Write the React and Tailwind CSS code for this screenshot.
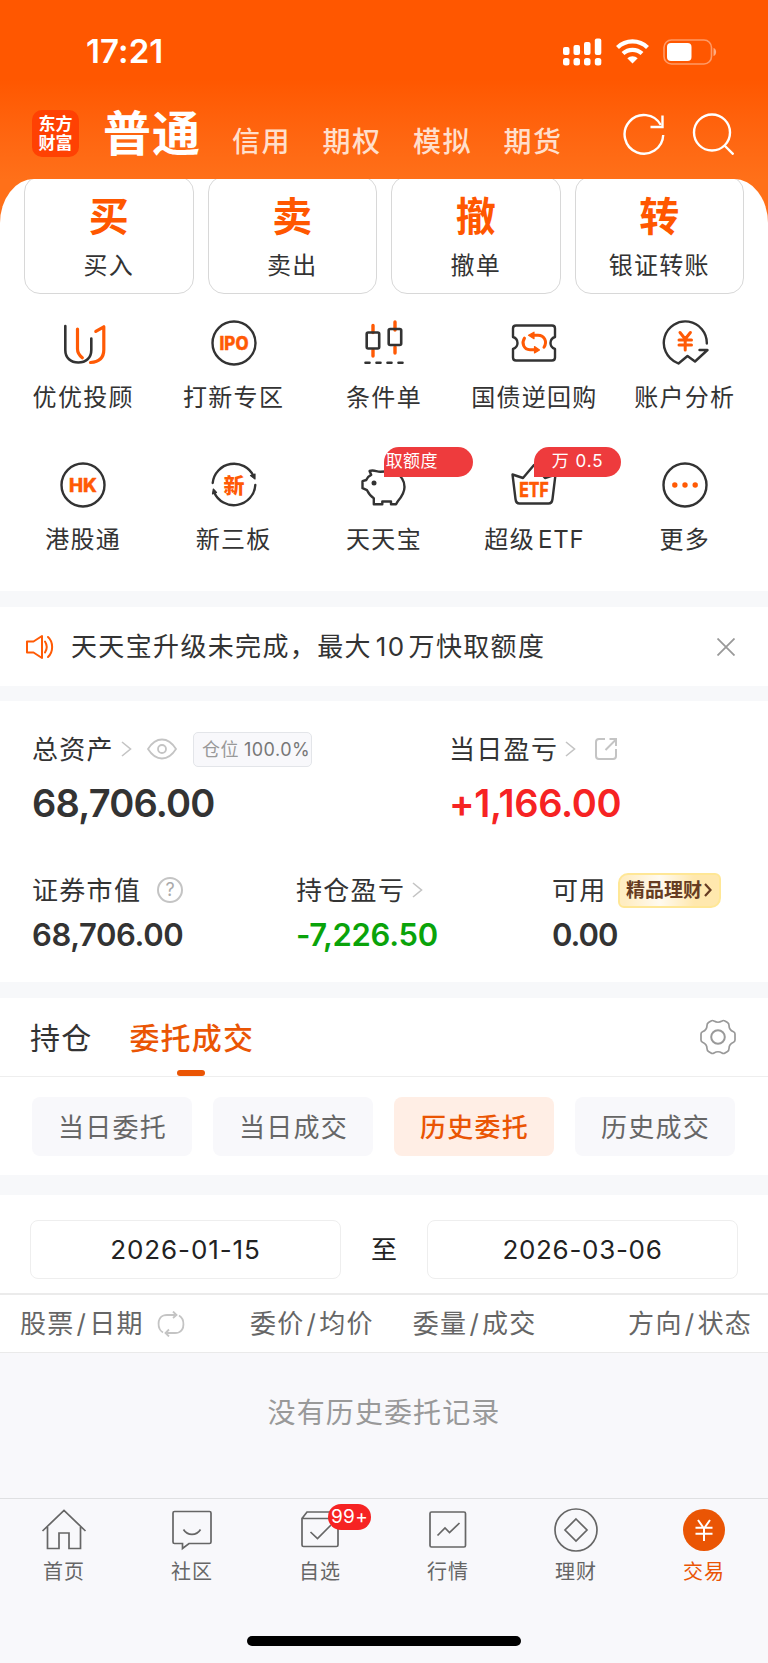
import React from 'react';

const DARK = '#333333';
const ORANGE = '#ff5a05';

const tabs = ['信用', '期权', '模拟', '期货'];

const actions = [
    { mark: '买', label: '买入' },
    { mark: '卖', label: '卖出' },
    { mark: '撤', label: '撤单' },
    { mark: '转', label: '银证转账' },
];

const Icon = ({ children, className = 'size-12', box = '0 0 48 48' }) => (
    <svg className={className} viewBox={box} fill="none" strokeLinecap="round" strokeLinejoin="round">
        {children}
    </svg>
);

const AdvisorIcon = () => (
    <Icon>
        <g strokeWidth="2.6">
            <path d="M6.300 7v24c0 8 5.500 12.500 13 12.500S32.300 39 32.300 31V19.500" stroke={DARK} />
            <path d="M18.500 10v20c0 4 2 6.500 4.800 8.800" stroke={ORANGE} strokeWidth="3.200" />
            <path d="M36.800 12.400l8-4.600v23c0 8-5 12.200-13.300 12.700" stroke={ORANGE} strokeWidth="3.200" />
        </g>
    </Icon>
);

const IpoIcon = () => (
    <Icon>
        <circle cx="24" cy="24" r="21.500" stroke={DARK} strokeWidth="2.400" />
        <text x="24" y="30.700" textAnchor="middle" fontSize="18.500" fontWeight="800" fill={ORANGE} stroke={ORANGE} strokeWidth=".4" textLength="29" lengthAdjust="spacingAndGlyphs">IPO</text>
    </Icon>
);

const CandleIcon = () => (
    <Icon>
        <path d="M13 6.500v7M13 31v6M35 3v8M35 28v6" stroke={ORANGE} strokeWidth="3.400" />
        <rect x="6.700" y="13.500" width="12.500" height="16" rx="1.500" stroke={DARK} strokeWidth="2.600" />
        <rect x="28.700" y="10" width="12.500" height="16" rx="1.500" stroke={DARK} strokeWidth="2.600" />
        <path d="M5.500 43.700h4M16.500 43.700h4M27.500 43.700h4M38.500 43.700h4" stroke={DARK} strokeWidth="2.600" />
    </Icon>
);

const RepoIcon = () => (
    <Icon>
        <path d="M6 6.500h36q3 0 3 3v8.500q-4.500 1.500-4.500 6t4.500 6v8.500q0 3-3 3H6q-3 0-3-3V30q4.500-1.500 4.500-6T3 18V9.500q0-3 3-3z" stroke={DARK} strokeWidth="2.400" />
        <path d="M14.500 19.200c-3.200 4.800-.8 11.500 5.500 11.500h5M24 16.200h4c6.500 0 9.500 6.500 6 12" stroke={ORANGE} strokeWidth="3" />
        <path d="M24 13.200l-5.500 3 5.500 3.500zM24.500 27.500l5 3.400-5 3z" fill={ORANGE} stroke={ORANGE} strokeWidth="1.200" />
    </Icon>
);

const AnalysisIcon = () => (
    <Icon>
        <path d="M45.800 24.500A21.500 21.500 0 1 0 15.500 43.500L17.500 44.500 26.500 37 34 42.500 46.500 31H38.500" stroke={DARK} strokeWidth="2.400" />
        <path d="M19 13.500l5.200 6.500 5.200-6.500M18 21h12.500M18 26h12.500M24.200 21v10" stroke={ORANGE} strokeWidth="3" />
    </Icon>
);

const HkIcon = () => (
    <Icon>
        <circle cx="24" cy="24" r="21.500" stroke={DARK} strokeWidth="2.400" />
        <text x="24" y="30.700" textAnchor="middle" fontSize="18.500" fontWeight="800" fill={ORANGE} stroke={ORANGE} strokeWidth=".4" textLength="28" lengthAdjust="spacingAndGlyphs">HK</text>
    </Icon>
);

const NewBoardIcon = () => (
    <Icon>
        <path d="M2.700 22A21.500 21.500 0 0 1 43.500 15M45.300 24A21.500 21.500 0 0 1 4 31" stroke={DARK} strokeWidth="2.400" />
        <path d="M40.500 14.500l4.500-1.500v5zM2.500 33l.8-5 3.200 3.500z" fill={DARK} stroke={DARK} strokeWidth="1.200" />
        <text x="24" y="31.500" textAnchor="middle" fontSize="21" fontWeight="800" fill={ORANGE}>新</text>
    </Icon>
);

const PiggyIcon = () => (
    <Icon>
        <path d="M9.500 10c4.500-1.500 7 .8 11 .7 6-.5 10.500-.5 15.500 1.800 5 2.400 8.500 7 8.500 13.500 0 6-3.500 10.500-6.500 14-.8 1-1.300 1.800-1.800 3.200H31v-2.700h-8.700v2.700h-8.500v-6c-3-1.800-5-4.500-6.800-8L2.500 27.200v-7L6.200 19c1-2.500 2.800-4.200 5-5.200z" stroke={DARK} strokeWidth="2.400" />
        <circle cx="14" cy="22" r="2.500" fill={DARK} />
    </Icon>
);

const EtfIcon = () => (
    <Icon>
        <path d="M2.500 13.500l10.500 3.500L24 4l11 13 10.500-3.500L42.500 38q-.5 4.500-4 4.500h-29q-3.500 0-4-4.500z" stroke={DARK} strokeWidth="2.400" />
        <text x="24" y="35.500" textAnchor="middle" fontSize="19.500" fontWeight="800" fill={ORANGE} stroke={ORANGE} strokeWidth=".3" textLength="29.500" lengthAdjust="spacingAndGlyphs">ETF</text>
    </Icon>
);

const MoreIcon = () => (
    <Icon>
        <circle cx="24" cy="24" r="21.500" stroke={DARK} strokeWidth="2.400" />
        <g fill={ORANGE}>
            <circle cx="13.800" cy="24" r="2.700" />
            <circle cx="24" cy="24" r="2.700" />
            <circle cx="34.200" cy="24" r="2.700" />
        </g>
    </Icon>
);

const services = [
    { label: '优优投顾', icon: AdvisorIcon },
    { label: '打新专区', icon: IpoIcon },
    { label: '条件单', icon: CandleIcon },
    { label: '国债逆回购', icon: RepoIcon },
    { label: '账户分析', icon: AnalysisIcon },
    { label: '港股通', icon: HkIcon },
    { label: '新三板', icon: NewBoardIcon },
    { label: '天天宝', icon: PiggyIcon, badge: '取额度' },
    { label: '超级ETF', icon: EtfIcon, badge: '万 0.5' },
    { label: '更多', icon: MoreIcon },
];

const filters = ['当日委托', '当日成交', '历史委托', '历史成交'];

const Chevron = () => (
    <svg className="h-[18px] w-[11px]" viewBox="0 0 11 18" fill="none" stroke="#c4c4c4" strokeWidth="1.600">
        <path d="M1 2l8.500 7L1 16" />
    </svg>
);

const navItems = [
    {
        label: '首页',
        icon: (
            <path d="M2.500 24L24 3.500 45.500 24M7.500 20v21.500H19V26h10v15.500h11.500V20" />
        ),
    },
    {
        label: '社区',
        icon: (
            <>
                <path d="M6.500 4.500h35q1.500 0 1.500 1.500v29q0 1.500-1.500 1.500H21l-6.500 5v-5h-8Q5 36.500 5 35V6q0-1.500 1.500-1.500z" />
                <path d="M15.500 22.500c4 6.500 13 6.500 17 0" />
            </>
        ),
    },
    {
        label: '自选',
        badge: '99+',
        icon: (
            <>
                <path d="M6 11.500L11 5h27l4 6.500M6 11.500h36V38q0 1.500-1.500 1.500h-33Q6 39.500 6 38z" />
                <path d="M14.500 25l7 6.500L35 18" />
            </>
        ),
    },
    {
        label: '行情',
        icon: (
            <>
                <rect x="6" y="5" width="35.500" height="35" rx="1.500" />
                <path d="M13.500 28.500l7.500-7.500 4.500 4.500 10-9.500" />
            </>
        ),
    },
    {
        label: '理财',
        icon: (
            <>
                <circle cx="24" cy="23" r="21" />
                <path d="M24 12l11 11-11 11-11-11z" />
            </>
        ),
    },
    { label: '交易', active: true },
];

const StatusBar = () => (
    <div className="flex h-[103px] items-center justify-between pl-[86px] pr-[51px] text-white">
        <span className="text-[33px] leading-none font-semibold tracking-[0.100px]">17:21</span>
        <div className="flex items-center">
            <svg className="h-7 w-[39px]" viewBox="0 0 39 28" fill="#fff">
                <rect x="0" y="9" width="6.500" height="8" rx="2" />
                <rect x="10.500" y="7" width="6.500" height="10" rx="2" />
                <rect x="21" y="4" width="6.500" height="13" rx="2" />
                <rect x="31.800" y="0.500" width="6.500" height="16.500" rx="2" />
                <rect x="0" y="20" width="6.500" height="7.500" rx="2.500" />
                <rect x="10.500" y="20" width="6.500" height="7.500" rx="2.500" />
                <rect x="21" y="20" width="6.500" height="7.500" rx="2.500" />
                <rect x="31.800" y="20" width="6.500" height="7.500" rx="2.500" />
            </svg>
            <svg className="ml-[14px] h-[25px] w-[33px]" viewBox="0 0 33 25" fill="none" stroke="#fff" strokeWidth="4.200">
                <path d="M1.500 8.500a21.500 21.500 0 0 1 30 0" />
                <path d="M7 14.500a14 14 0 0 1 19 0" />
                <path d="M16.500 24.500l-5.200-5.200a7.600 7.600 0 0 1 10.400 0z" fill="#fff" stroke="none" />
            </svg>
            <svg className="ml-[14px] h-[26px] w-[54px]" viewBox="0 0 54 26" fill="none">
                <rect x="1" y="1" width="47.500" height="24" rx="7.500" stroke="#fff" strokeOpacity=".4" strokeWidth="1.600" />
                <rect x="4" y="4" width="24.500" height="18" rx="4" fill="#fff" />
                <path d="M50.500 9v8c3.500-1 3.500-7 0-8z" fill="#fff" fillOpacity=".5" />
            </svg>
        </div>
    </div>
);

const Header = () => (
    <header className="-mb-[46px] h-[225px] bg-linear-to-b from-[#ff5700] from-35% to-[#ff7019] to-80%">
        <StatusBar />
        <div className="flex h-[61px] items-center pl-8 text-white">
            <div className="flex size-[47px] flex-col items-center justify-center rounded-[10px] bg-[#ff4103] text-[17px] leading-[19px] font-bold">
                <span>东方</span>
                <span>财富</span>
            </div>
            <h1 className="ml-6 text-[48px] leading-[60px] font-bold tracking-[1px]">普通</h1>
            <nav className="mt-[17px] ml-[31px] flex gap-[31.500px] text-[28px] leading-10 font-medium tracking-[1.500px] text-[#ffdfcc]">
                {tabs.map((tab) => (
                    <span key={tab}>{tab}</span>
                ))}
            </nav>
            <svg className="ml-[60px] size-[42px]" viewBox="0 0 42 42" fill="none" stroke="#fff" strokeWidth="2.400">
                <path d="M40.200 22A19.300 19.300 0 1 1 37.800 12" />
                <path d="M39.500 2.500v11.500H27.500" />
            </svg>
            <svg className="ml-[27px] size-[42px]" viewBox="0 0 42 42" fill="none" stroke="#fff" strokeWidth="2.400">
                <circle cx="20" cy="19.500" r="18" />
                <path d="M32.500 32.500l9 9" />
            </svg>
        </div>
    </header>
);

const Services = () => (
    <section className="grid h-[297px] grid-cols-5 gap-y-[3px] px-2 pt-[25px]">
        {services.map(({ label, icon: Glyph, badge }) => (
            <div key={label} className="relative flex h-[139px] flex-col items-center">
                <Glyph />
                <span className="mt-[13px] text-2xl leading-9 tracking-[1.300px] whitespace-nowrap text-[#333]">
                    {label === '超级ETF' ? <>超级<span className="ml-[3px] tracking-[0.800px]">ETF</span></> : label}
                </span>
                {badge && (
                    <span className={`absolute -top-[14px] left-[75px] flex h-[30px] items-center overflow-hidden rounded-2xl rounded-bl-none bg-[#ee3b3d] text-[17px] text-white ${badge === '取额度' ? 'w-[89px] pl-[2px] tracking-[0.300px]' : 'w-[87px] justify-center tracking-[1px]'}`}>
                        {badge}
                    </span>
                )}
            </div>
        ))}
    </section>
);

const Notice = () => (
    <section className="flex h-[79px] items-center pl-[26px] pr-[33px]">
        <svg className="h-[26px] w-[28px]" viewBox="0 0 28 26" fill="none" stroke={ORANGE} strokeWidth="2">
            <path d="M1 7.500h6.500L16 2v22l-8.500-5.500H1z" strokeLinejoin="round" />
            <path d="M19 7.500q3.500 5.500 0 11M22 3c5.500 5 5.500 15 0 20" strokeLinecap="round" />
        </svg>
        <p className="ml-[17px] text-[26px] leading-10 tracking-[1.350px]">天天宝升级未完成，最大<span className="mr-[3px] ml-1">10</span>万快取额度</p>
        <svg className="ml-auto size-[18px]" viewBox="0 0 18 18" stroke="#999" strokeWidth="1.800">
            <path d="M.5.500l17 17M17.500.500l-17 17" />
        </svg>
    </section>
);

const Assets = () => (
    <section className="h-[281px] px-8 pt-7 text-[#333]">
        <div className="flex">
            <div className="w-[417px]">
                <div className="flex h-10 items-center">
                    <span className="text-[26px] tracking-[1.300px]">总资产</span>
                    <span className="ml-[7px] flex"><Chevron /></span>
                    <svg className="ml-[15px] h-[22px] w-[30px]" viewBox="0 0 30 22" fill="none" stroke="#c4c4c4" strokeWidth="1.800">
                        <path d="M1 11q6-9.500 14-9.500T29 11q-6 9.500-14 9.500T1 11z" />
                        <circle cx="15" cy="11" r="4" />
                    </svg>
                    <span className="ml-4 flex h-[35px] w-[119px] items-center rounded-[5px] border border-[#e3e5e9] bg-[#f8f8fb] pl-2 text-[18px] tracking-[0.500px] whitespace-nowrap text-[#777]">
                        <span className="mr-[5px] text-[#999]">仓位</span>100.0%
                    </span>
                </div>
                <p className="mt-2 text-[38px] leading-[52px] font-semibold tracking-[-0.800px]">68,706.00</p>
            </div>
            <div>
                <div className="flex h-10 items-center">
                    <span className="text-[26px] tracking-[1.300px]">当日盈亏</span>
                    <span className="ml-[7px] flex"><Chevron /></span>
                    <svg className="ml-[18px] size-6" viewBox="0 0 24 24" fill="none" stroke="#c4c4c4" strokeWidth="2">
                        <path d="M11 2H5Q2 2 2 5v14q0 3 3 3h14q3 0 3-3v-7M11.500 13L22 2.500M15.500 2H22v7" />
                    </svg>
                </div>
                <p className="mt-2 text-[38px] leading-[52px] font-semibold tracking-[-0.300px] text-[#f62323]">+1,166.00</p>
            </div>
        </div>
        <div className="mt-[41px] flex">
            <div className="w-[264px]">
                <div className="flex h-10 items-center">
                    <span className="text-[26px] tracking-[1.300px]">证券市值</span>
                    <span className="ml-4 flex size-[26px] items-center justify-center rounded-full border-2 border-[#c4c4c4] text-[18px] leading-none text-[#aaa]">?</span>
                </div>
                <p className="mt-[5px] text-[31px] leading-10 font-semibold tracking-[-0.400px]">68,706.00</p>
            </div>
            <div className="w-[256px]">
                <div className="flex h-10 items-center">
                    <span className="text-[26px] tracking-[1.300px]">持仓盈亏</span>
                    <span className="ml-[7px] flex"><Chevron /></span>
                </div>
                <p className="mt-[5px] text-[31px] leading-10 font-semibold tracking-[-0.300px] text-[#0aa30a]">-7,226.50</p>
            </div>
            <div>
                <div className="flex h-10 items-center">
                    <span className="text-[26px] tracking-[1.300px]">可用</span>
                    <span className="ml-[11px] flex h-[35px] w-[103px] items-center justify-center rounded-tl-[10px] rounded-tr-md rounded-br-[10px] rounded-bl-md border-2 border-[#ffe796] bg-linear-to-r from-[#ffedc2] from-5% via-[#fffaf0] via-40% to-[#ffe8ae] to-75% text-[19px] leading-none font-bold whitespace-nowrap text-[#663c22]">
                        精品理财
                        <svg className="ml-0.5 h-[14px] w-2" viewBox="0 0 8 14" fill="none" stroke="#663c22" strokeWidth="2.200">
                            <path d="M1 1l5.500 6L1 13" />
                        </svg>
                    </span>
                </div>
                <p className="mt-[5px] text-[31px] leading-10 font-semibold tracking-[-1px]">0.00</p>
            </div>
        </div>
    </section>
);

const Orders = () => (
    <section>
        <div className="flex h-[79px] items-center border-b border-[#eee] pl-[30px] pr-8 text-[30px]">
            <span className="pt-[2px] tracking-[1.200px]">持仓</span>
            <div className="relative ml-[37px] flex h-full items-center pt-[2px] font-medium tracking-[1.200px] text-[#ea5504]">
                委托成交
                <span className="absolute bottom-0 left-[48px] h-[6px] w-7 rounded-[3px] bg-[#ea5504]" />
            </div>
            <svg className="ml-auto size-9" viewBox="0 0 36 36" fill="none" stroke="#999" strokeWidth="1.700" strokeLinejoin="round">
                <path d="M1 15q0-1.500 1.500-2.200Q7 11 7 6.500 7 4.500 8.500 3.500L11 2q1.500-1 3 0 4 2.500 8 0 1.500-1 3 0l2.500 1.500Q29 4.500 29 6.500q0 4.500 4.500 6.300Q35 13.500 35 15v6q0 1.500-1.500 2.200Q29 25 29 29.500q0 2-1.500 3L25 34q-1.500 1-3 0-4-2.500-8 0-1.500 1-3 0l-2.500-1.500Q7 31.500 7 29.500 7 25 2.500 23.200 1 22.500 1 21z" />
                <circle cx="18" cy="18" r="6.800" strokeWidth="2" />
            </svg>
        </div>
        <div className="flex h-[98px] gap-[21px] px-8 pt-5">
            {filters.map((name) => (
                <button
                    key={name}
                    className={`h-[59px] w-[160px] rounded-lg pt-[1px] pl-[1px] text-[26px] tracking-[1.300px] ${name === '历史委托' ? 'bg-[#ffeee5] font-medium text-[#ea5504]' : 'bg-[#f8f8fb] text-[#666]'}`}
                >
                    {name}
                </button>
            ))}
        </div>
    </section>
);

const History = () => (
    <section>
        <div className="flex h-[100px] items-center justify-between border-b-2 border-[#ebebeb] px-[30px] pt-[11px] text-[26px] text-[#222]">
            <div className="flex h-[59px] w-[311px] items-center justify-center rounded-lg border border-[#eee] tracking-[0.900px]">2026-01-15</div>
            <span>至</span>
            <div className="flex h-[59px] w-[311px] items-center justify-center rounded-lg border border-[#eee] tracking-[0.700px]">2026-03-06</div>
        </div>
        <div className="flex h-[58px] items-center border-b border-[#eaeaea] pl-5 pr-[16px] text-[26px] tracking-[1.300px] text-[#666]">
            <span>股票<span className="mx-[2px]">/</span>日期</span>
            <svg className="ml-[13px] h-[26px] w-7" viewBox="0 0 28 26" fill="none" stroke="#c4c4c4" strokeWidth="1.800">
                <path d="M6 21.500C0 18 0 7 6.500 4.500Q8 4 10 4h9M22 4.500c6 3.500 6 14.500-.5 17Q20 22 18 22H9" />
                <path d="M16 .5L19.500 4 16 7M12 18.500L8.500 22l3.500 3.500" />
            </svg>
            <span className="ml-[65px]">委价<span className="mx-[2px]">/</span>均价</span>
            <span className="ml-[39px]">委量<span className="mx-[2px]">/</span>成交</span>
            <span className="ml-auto">方向<span className="mx-[2px]">/</span>状态</span>
        </div>
        <div className="h-[145px] bg-[#f8f8fb] pt-10 text-center text-[28px] leading-10 tracking-[1.100px] text-[#999]">
            没有历史委托记录
        </div>
    </section>
);

const TabBar = () => (
    <footer className="flex h-[165px] flex-col items-center border-t border-[#dfe0e2] bg-[#f8f8fb]">
        <div className="grid w-full grid-cols-6">
            {navItems.map(({ label, icon, badge, active }) => (
                <div key={label} className={`relative flex flex-col items-center pt-2 text-[20px] tracking-[1px] ${active ? 'text-[#ea5504]' : 'text-[#666]'}`}>
                    {active ? (
                        <svg className="h-[46px] w-12" viewBox="0 0 48 46" fill="none">
                            <circle cx="24" cy="23" r="21" fill="#ea5504" />
                            <path d="M18 13l6 8.500 6-8.500M15.500 20.800h17M15.500 26.800h17M24 21v13" stroke="#fff" strokeWidth="2" />
                        </svg>
                    ) : (
                        <svg className="h-[46px] w-12" viewBox="0 0 48 46" fill="none" stroke="#666" strokeWidth="1.700">
                            {icon}
                        </svg>
                    )}
                    <span className="mt-[5px] leading-7">{label}</span>
                    {badge && (
                        <span className="absolute top-[5px] left-[72px] flex h-[26px] w-[43px] items-center justify-center rounded-full bg-[#f62323] text-[19px] tracking-[0.300px] text-white">
                            {badge}
                        </span>
                    )}
                </div>
            ))}
        </div>
        <div className="mt-[50px] h-[10px] w-[274px] rounded-full bg-black" />
    </footer>
);

const App = () => {
    return (
        <div className="w-[768px] overflow-hidden bg-white font-['Inter','Noto_Sans_CJK_SC',sans-serif] text-[#333]">
            <Header />
            <main className="relative overflow-hidden rounded-[34px_34px_0_0/44px_44px_0_0] bg-white">
                <section className="-mt-[3px] flex gap-[14px] px-6">
                    {actions.map(({ mark, label }) => (
                        <div key={label} className="flex h-[118px] flex-1 flex-col items-center rounded-2xl border border-[#d8d8d8]">
                            <span className="mt-[15px] text-[40px] leading-[50px] font-bold text-[#ff5700]">{mark}</span>
                            <span className="mt-[6px] text-2xl leading-9 tracking-[1.300px]">{label}</span>
                        </div>
                    ))}
                </section>
                <Services />
                <div className="h-4 bg-[#f7f8fa]" />
                <Notice />
                <div className="h-[15px] bg-[#f7f8fa]" />
                <Assets />
                <div className="h-4 bg-[#f7f8fa]" />
                <Orders />
                <div className="h-5 bg-[#f7f8fa]" />
                <History />
            </main>
            <TabBar />
        </div>
    );
};

export default App;
